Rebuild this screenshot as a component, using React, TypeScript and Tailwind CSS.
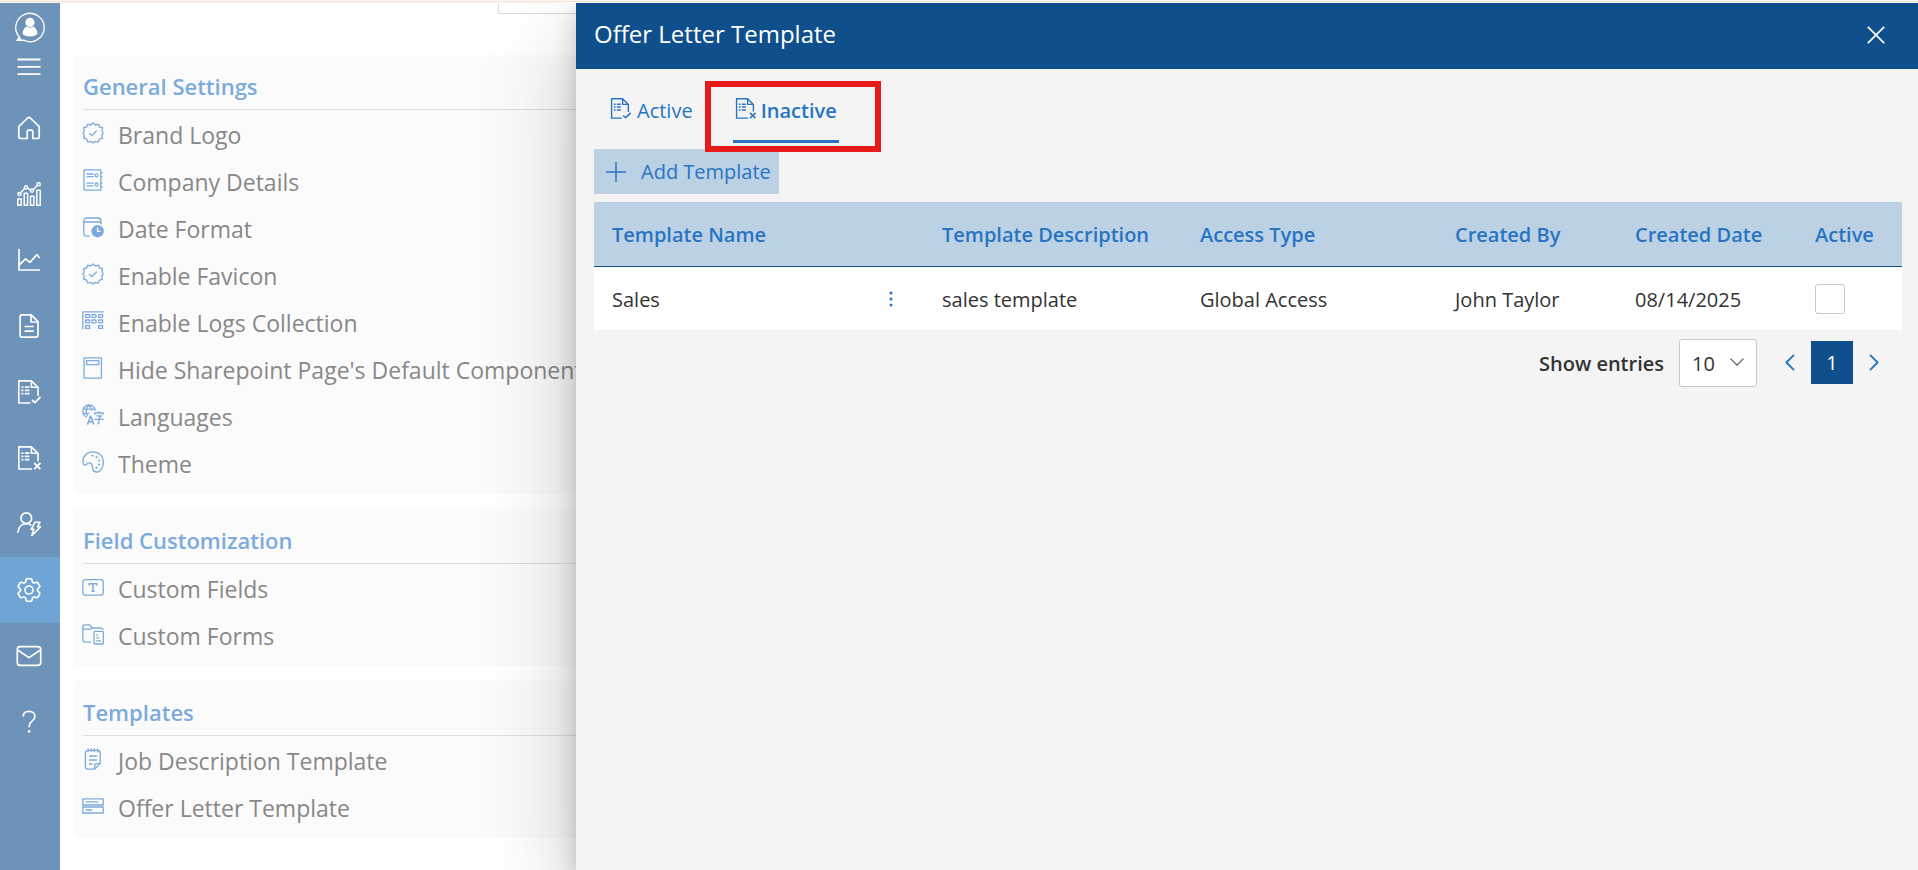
import React from "react";

type IconProps = { className?: string };

const Svg = ({
  children,
  box = "0 0 24 24",
  className = "size-6",
  stroke = 1.5,
}: {
  children: React.ReactNode;
  box?: string;
  className?: string;
  stroke?: number;
}) => (
  <svg
    viewBox={box}
    className={className}
    fill="none"
    stroke="currentColor"
    strokeWidth={stroke}
    strokeLinejoin="round"
    aria-hidden="true"
  >
    {children}
  </svg>
);

/* ---------- sidebar icons (24px box) ---------- */

const LogoIcon = () => (
  <Svg box="0 0 30 31" className="h-[31px] w-[30px]" stroke={1.3}>
    <path d="M4.6 25.200A14.200 14.200 0 1 1 8.600 28.200L2.200 28.400z" />
    <path d="M4.200 24.800 1.600 28.600l4.800-.6z" fill="currentColor" strokeWidth={0.6} />
    <circle cx="15" cy="10.400" r="4.600" fill="currentColor" stroke="none" />
    <path
      d="M7.500 22c.2-3.600 1.800-6.600 4.300-7.400 1.800 1.500 4.600 1.500 6.400 0 2.500.8 4.100 3.800 4.300 7.400-2 1.700-4.700 2.500-7.500 2.500S9.500 23.700 7.500 22z"
      fill="currentColor"
      stroke="none"
    />
  </Svg>
);

const HomeIcon = () => (
  <Svg stroke={1.7}>
    <path d="M1.800 10.600 10.600 2c.9-.8 1.900-.8 2.800 0l8.800 8.600v9.900c0 1.200-.8 2-2 2h-4.400v-6.700c0-1-.6-1.600-1.600-1.600h-2.400c-1 0-1.600.6-1.600 1.600v6.700H3.800c-1.200 0-2-.8-2-2z" />
  </Svg>
);

const ChartIcon = () => (
  <Svg stroke={1.5}>
    <path d="M.8 17h3.400v6.200H.8zM7.200 11.200h3.400v12H7.200zM13.500 14.200h3.400v9h-3.400zM19.800 8.200h3.400v15h-3.400z" />
    <path d="M3.800 10.600 7.600 6.600M10.400 6.200l3.200 1.700M16.400 7.400l4-4.200" />
    <circle cx="2.500" cy="12" r="1.600" />
    <circle cx="9" cy="5.400" r="1.600" />
    <circle cx="15" cy="8.600" r="1.600" />
    <circle cx="21.600" cy="2.200" r="1.600" />
  </Svg>
);

const TrendIcon = () => (
  <Svg stroke={1.700}>
    <path d="M2 1v21h21M2.300 16.800l6.200-6 4.400 3.600 7-7.800 2.600 3.400" />
  </Svg>
);

const DocIcon = () => (
  <Svg stroke={1.700}>
    <path d="M5 .8h9.200l6.800 6.800v13.600c0 1-.8 1.900-1.900 1.900H5c-1 0-1.900-.9-1.900-1.900V2.700C3.100 1.700 4 .8 5 .8zM14 1v7h7M7.500 12.500h9.300M7.500 17.200h9.300" />
  </Svg>
);

const ListLines = () => (
  <path d="M4.400 7.200h2M4.400 10.400h2M4.400 13.600h2M7.800 7.200h4.600M7.800 10.400h4.600M7.800 13.600h4.600" strokeWidth={1.700} />
);

const DocCheckIcon = ({ className = "size-6" }: IconProps) => (
  <Svg className={className} stroke={1.600}>
    <path d="M13.400 23H1.800V.9h12.600l6.600 6.400V16M14.400 1v6.300H21" />
    <ListLines />
    <path d="m15 20 2.800 2.600L23.600 17" strokeWidth={1.800} />
  </Svg>
);

const DocXIcon = ({ className = "size-6" }: IconProps) => (
  <Svg className={className} stroke={1.600}>
    <path d="M15 23H1.800V.9h12.600l6.600 6.400v8M14.400 1v6.300H21" />
    <ListLines />
    <path d="m17.200 17 6.200 6.200M23.400 17l-6.200 6.200" strokeWidth={1.800} />
  </Svg>
);

const UserBoltIcon = () => (
  <Svg stroke={1.700}>
    <circle cx="9.300" cy="6.200" r="5.300" />
    <path d="M.8 20.600C1.400 15 4.800 11.600 9.300 11.600c2 0 3.700.6 5 1.700" />
    <path d="M18 10.200h5l-2.400 4.600h3L14.800 23.600l2-6.300h-2.700z" strokeWidth={1.600} />
  </Svg>
);

const GearIcon = () => (
  <Svg box="2.4 2.400 19.200 19.200" stroke={1.300}>
    <circle cx="12" cy="12" r="3.200" />
    <path d="M9.594 3.940c.090-.542.560-.940 1.110-.940h2.593c.550 0 1.020.398 1.110.940l.213 1.281c.063.374.313.686.645.870.074.040.147.083.220.127.325.196.720.257 1.075.124l1.217-.456a1.125 1.125 0 0 1 1.370.490l1.296 2.247a1.125 1.125 0 0 1-.260 1.431l-1.003.827c-.293.241-.438.613-.430.992a7.723 7.723 0 0 1 0 .255c-.008.378.137.750.430.991l1.004.827c.424.350.534.955.260 1.430l-1.298 2.247a1.125 1.125 0 0 1-1.369.491l-1.217-.456c-.355-.133-.750-.072-1.076.124a6.470 6.470 0 0 1-.220.128c-.331.183-.581.495-.644.869l-.213 1.281c-.090.543-.560.940-1.110.940h-2.594c-.550 0-1.019-.398-1.110-.940l-.213-1.281c-.062-.374-.312-.686-.644-.870a6.520 6.520 0 0 1-.220-.127c-.325-.196-.720-.257-1.076-.124l-1.217.456a1.125 1.125 0 0 1-1.369-.490l-1.297-2.247a1.125 1.125 0 0 1 .260-1.431l1.004-.827c.292-.240.437-.613.430-.991a6.932 6.932 0 0 1 0-.255c.007-.380-.138-.751-.430-.992l-1.004-.827a1.125 1.125 0 0 1-.260-1.430l1.297-2.247a1.125 1.125 0 0 1 1.370-.491l1.216.456c.356.133.751.072 1.076-.124.072-.044.146-.086.220-.128.332-.183.582-.495.644-.869l.214-1.280Z" />
  </Svg>
);

const MailIcon = () => (
  <Svg box="0 0 26 22" className="h-[22px] w-[26px]" stroke={1.700}>
    <rect x="1.300" y="1.600" width="23.400" height="18.800" rx="2.800" />
    <path d="M2 5.200 13 12.600 24 5.200" />
  </Svg>
);

const HelpIcon = () => (
  <Svg stroke={1.700}>
    <path d="M6.200 6.600C6.200 3.400 8.600 1.400 12 1.400s5.900 2 5.900 5c0 4.600-5.700 5-5.700 9.600v1.200" />
    <circle cx="12.100" cy="21.400" r="1.300" fill="currentColor" stroke="none" />
  </Svg>
);

/* ---------- settings icons (22px box) ---------- */

const SealIcon = () => (
  <Svg box="0 0 22 22" className="size-[22px]" stroke={1.300}>
    <path d="M11 1 13.300 3l3.200-.8 1 2.800 3.100.7-.7 3.100L21.300 11l-1.600 2.300.7 3.100-3 .8-1.200 2.900-3-.7L11 21l-2.300-1.700-3 .6-1.200-2.900-2.900-.8.6-3L.8 11l1.500-2.200-.7-3.100 3-.7 1.100-2.800L8.700 3z" />
    <path d="m7.200 11.200 2.600 2.400 5-4.800" />
  </Svg>
);

const DetailsIcon = () => (
  <Svg box="0 0 22 22" className="size-[22px]" stroke={1.300}>
    <path d="M2 .8h16.800v20.400H2zM4.600 5h7M4.600 7.600h7M4.600 14.200h7M4.600 16.800h7M19 3.600h1.600M19 7.800h1.600M19 13.800h1.600M19 18h1.600" />
    <circle cx="14.600" cy="6.300" r="1.500" />
    <circle cx="14.600" cy="15.500" r="1.500" />
  </Svg>
);

const DateIcon = () => (
  <Svg box="0 0 22 22" className="size-[22px]" stroke={1.300}>
    <path d="M7.600 20.200H5C3.200 20.200 1.800 19 1.800 17V5.200C1.800 3 3.200 2 5 2h10.600c2 0 3.400 1.200 3.400 3.200v3M1.800 6H19" />
    <circle cx="15.600" cy="15.200" r="6.200" fill="currentColor" stroke="none" />
    <path d="M15.600 11.600v3.800h3" stroke="#fbfbfb" />
  </Svg>
);

const LogsIcon = () => (
  <Svg box="0 0 22 22" className="size-[22px]" stroke={1.300}>
    <path d="M.8 19.600V1.800h20.800" />
    <path d="M3.600 4.600h4v2.800h-4zM10 4.600h4v2.800h-4zM16.600 4.600h4v2.800h-4zM3.600 10h4v2.800h-4zM10 10h4v2.800h-4zM16.600 10h4v2.800h-4zM3.600 15.600h4v2.800h-4zM16.600 15.600h4v2.800h-4z" />
  </Svg>
);

const PageIcon = () => (
  <Svg box="0 0 22 22" className="size-[22px]" stroke={1.300}>
    <path d="M2 .8h17.400v20.400H2zM4.600 3.600h12.200v4H4.600z" />
  </Svg>
);

const LanguagesIcon = () => (
  <Svg box="0 0 22 22" className="size-[22px]" stroke={1.300}>
    <path d="M5 13C2.400 12.200.8 9.800.8 7.200.8 3.800 3.500 1 7 1c3.300 0 6 2.400 6.200 5.600M.8 5.200h12M1 9.400h6.600M7 1C4.800 3.200 4.200 5 4.200 7.200c0 1.600.4 3.200 1.400 4.600M7 1c2 2 2.600 3.600 2.800 5.800" />
    <path d="M5.400 20.600 8.600 12l3.200 8.600M6.400 17.800h4.400" strokeWidth={1.500} />
    <path d="M16.800 7v1.800M12.800 10.800V9h8.400v1.800M14.400 11.800h5.200l-2.600 2.400v4.400c0 .8-.4 1.200-1.800 1.200M12.400 15.400h9.400" />
  </Svg>
);

const PaletteIcon = () => (
  <Svg box="0 0 22 22" className="size-[22px]" stroke={1.300}>
    <path d="M1.200 12.400C-.2 6 4.600.8 11 .8c6 0 10.400 4.200 10.400 10.200 0 5.200-2.800 10-6.400 10-2.800 0-4.200-1.800-4.400-4.600-.2-3-1-4.600-3.200-4.600-2.400 0-3.200 2.600-4.800 2.400-.8 0-1.200-.8-1.400-1.800z" />
    <g fill="currentColor" stroke="none">
      <circle cx="10.400" cy="4.600" r="1.100" />
      <circle cx="14.600" cy="6.200" r="1.100" />
      <circle cx="17.200" cy="9.600" r="1.100" />
      <circle cx="17" cy="13.600" r="1.100" />
      <circle cx="14.400" cy="16.800" r="1.100" />
    </g>
  </Svg>
);

const FieldIcon = () => (
  <Svg box="0 0 22 22" className="size-[22px]" stroke={1.300}>
    <rect x=".8" y="3.600" width="20.400" height="15.600" rx="2.600" />
    <path d="M7.200 9.400V7.800h7.600v1.600M11 7.800v7.400M9.400 15.200h3.200" strokeWidth={1.500} />
  </Svg>
);

const FormsIcon = () => (
  <Svg box="0 0 22 22" className="size-[22px]" stroke={1.300}>
    <path d="M9 19.200H3.400C1.800 19.200.8 18.200.8 16.800V4c0-1.400.8-2.200 2.200-2.200h4.800L10.200 5h8.600c1.400 0 2.200.8 2.400 2M.8 6.200h7.400L10.400 5" />
    <rect x="12" y="8.400" width="9.400" height="12.600" rx="1" />
    <path d="M14.200 12h1.400M14.200 14.800h3M14.200 17.800h5" />
  </Svg>
);

const NoteIcon = () => (
  <Svg box="0 0 22 22" className="size-[22px]" stroke={1.300}>
    <path d="M12.600 21.200H6c-1.600 0-2.600-1-2.600-2.600V5c0-1.600 1-2.600 2.600-2.600h9.600c1.600 0 2.600 1 2.600 2.600v10.600zM18.200 15.600h-3.400c-1.400 0-2.200.8-2.200 2.200v3.400" />
    <path d="M6.200.6v3.600M9.400.6v3.600M12.400.6v3.600M15.600.6v3.600M7 8h8M7 12h8M7 16h3.600" />
  </Svg>
);

const LetterIcon = () => (
  <Svg box="0 0 22 22" className="size-[22px]" stroke={1.300}>
    <path d="M.8 3.800h20.400V10H.8zM.8 12h20.400v6H.8zM3.600 6.900h12.600M3.600 15h6.400" />
  </Svg>
);

/* ---------- data ---------- */

const navItems = [
  { label: "Home", icon: HomeIcon },
  { label: "Dashboard", icon: ChartIcon },
  { label: "Trends", icon: TrendIcon },
  { label: "Documents", icon: DocIcon },
  { label: "Approved", icon: DocCheckIcon },
  { label: "Rejected", icon: DocXIcon },
  { label: "Candidates", icon: UserBoltIcon },
  { label: "Settings", icon: GearIcon, active: true },
  { label: "Mail", icon: MailIcon },
  { label: "Help", icon: HelpIcon },
];

const sections = [
  {
    title: "General Settings",
    items: [
      { label: "Brand Logo", icon: SealIcon },
      { label: "Company Details", icon: DetailsIcon },
      { label: "Date Format", icon: DateIcon },
      { label: "Enable Favicon", icon: SealIcon },
      { label: "Enable Logs Collection", icon: LogsIcon },
      { label: "Hide Sharepoint Page's Default Components", icon: PageIcon },
      { label: "Languages", icon: LanguagesIcon },
      { label: "Theme", icon: PaletteIcon },
    ],
  },
  {
    title: "Field Customization",
    items: [
      { label: "Custom Fields", icon: FieldIcon },
      { label: "Custom Forms", icon: FormsIcon },
    ],
  },
  {
    title: "Templates",
    items: [
      { label: "Job Description Template", icon: NoteIcon },
      { label: "Offer Letter Template", icon: LetterIcon },
    ],
  },
];

const columns = [
  { label: "Template Name", width: "w-[330px]" },
  { label: "Template Description", width: "w-[258px]" },
  { label: "Access Type", width: "w-[255px]" },
  { label: "Created By", width: "w-[180px]" },
  { label: "Created Date", width: "w-[180px]" },
  { label: "Active", width: "w-[105px]" },
];

/* ---------- layout ---------- */

const Sidebar = () => (
  <nav className="flex w-[60px] shrink-0 flex-col bg-[#6e93b9] text-white">
    <a href="#" aria-label="Profile" className="flex h-12 items-center justify-center">
      <LogoIcon />
    </a>
    <button type="button" aria-label="Toggle menu" className="flex h-11 items-start justify-center pt-1 pr-[2px]">
      <Svg className="size-6" stroke={1.800}>
        <path d="M.5 4.500h23M.5 11.800h23M.5 19.200h23" />
      </Svg>
    </button>
    {navItems.map(({ label, icon: Icon, active }) => (
      <a
        key={label}
        href="#"
        aria-label={label}
        className={`flex h-[66px] items-center justify-center pr-[2px] ${active ? "bg-[#70a4d4]" : ""}`}
      >
        <Icon />
      </a>
    ))}
  </nav>
);

const SettingsPage = () => (
  <main className="flex min-w-0 flex-1 flex-col gap-[15px] overflow-hidden pt-[52px] pl-[15px]">
    {sections.map((section) => (
      <section key={section.title} className="bg-[#fbfbfb] pb-2 pl-[7px]">
        <h2 className="ml-px flex h-[55px] items-end border-b border-[#dcdedf] pb-[6px] text-[22px] leading-[34px] font-semibold text-[#7cabdb]">
          {section.title}
        </h2>
        <ul>
          {section.items.map(({ label, icon: Icon }) => (
            <li key={label}>
              <a href="#" className="flex h-[47px] items-center gap-[14px] text-[23px] text-[#888888]">
                <span className="pb-[2px] text-[#7cabdb]">
                  <Icon />
                </span>
                <span className="pt-[3px] whitespace-nowrap">{label}</span>
              </a>
            </li>
          ))}
        </ul>
      </section>
    ))}
  </main>
);

const Drawer = () => (
  <aside
    role="dialog"
    aria-label="Offer Letter Template"
    className="absolute inset-y-0 right-0 left-[576px] bg-[#f4f4f4] shadow-[0_38px_86px_rgba(0,0,0,0.22),0_7px_22px_rgba(0,0,0,0.18)]"
  >
    <header className="flex h-[66px] items-center justify-between bg-[#0f4f8b] pr-[33px] pb-[2px] pl-[18px] text-white">
      <h1 className="pb-[2px] text-[24px]">Offer Letter Template</h1>
      <button type="button" aria-label="Close">
        <Svg box="0 0 18 18" className="size-[18px]" stroke={1.700}>
          <path d="m.8.8 16.400 16.400M17.200.8.8 17.200" />
        </Svg>
      </button>
    </header>

    <div className="pr-4 pl-[18px]">
      <div role="tablist" className="flex h-[80px] items-start gap-[37px] pl-[13px] text-[20px] text-[#2775c2]">
        <button type="button" role="tab" aria-selected="false" className="flex h-[74px] items-center gap-[6px] px-[3px] pt-[10px]">
          <DocCheckIcon className="mb-[6px] size-[21px]" />
          Active
        </button>
        <button
          type="button"
          role="tab"
          aria-selected="true"
          className="relative flex h-[74px] items-center gap-[5px] border-b-[3px] border-[#2775c2] px-[2px] pt-[13px] font-semibold"
        >
          <DocXIcon className="mb-[6px] size-[21px]" />
          Inactive
          <span className="pointer-events-none absolute top-3 -right-[42px] -bottom-3 -left-[28px] z-10 border-[6px] border-[#e81b1b]" />
        </button>
      </div>

      <button type="button" className="flex h-[45px] items-center gap-[15px] bg-[#bdd1e5] pr-2 pl-3 text-[20px] text-[#2775c2]">
        <Svg box="0 0 20 20" className="size-5" stroke={1.500}>
          <path d="M10 0v20M0 10h20" />
        </Svg>
        Add Template
      </button>

      <table className="mt-2 w-full table-fixed border-separate border-spacing-0 text-left text-[20px]">
        <thead className="bg-[#bdd1e5] text-[#2775c2]">
          <tr>
            {columns.map((column) => (
              <th
                key={column.label}
                scope="col"
                className={`h-[65px] border-b border-[#0f4f8b] pt-[2px] pl-[18px] font-semibold whitespace-nowrap ${column.width}`}
              >
                {column.label}
              </th>
            ))}
          </tr>
        </thead>
        <tbody className="bg-white text-[#333333]">
          <tr>
            <td className="h-[63px] pt-[3px] pl-[18px]">
              <div className="flex items-center justify-between pr-[30px]">
                Sales
                <button type="button" aria-label="More actions" className="pb-[3px] text-[#2775c2]">
                  <svg viewBox="0 0 6 16" className="h-4 w-[6px]" fill="currentColor" aria-hidden="true">
                    <circle cx="3" cy="2" r="1.500" />
                    <circle cx="3" cy="8" r="1.500" />
                    <circle cx="3" cy="14" r="1.500" />
                  </svg>
                </button>
              </div>
            </td>
            <td className="pt-[3px] pl-[18px]">sales template</td>
            <td className="pt-[3px] pl-[18px]">Global Access</td>
            <td className="pt-[3px] pl-[18px]">John Taylor</td>
            <td className="pt-[3px] pl-[18px]">08/14/2025</td>
            <td className="pl-[18px]">
              <input
                type="checkbox"
                aria-label="Active"
                className="block size-[30px] appearance-none rounded-[3px] border border-[#c8c8c8] bg-white"
              />
            </td>
          </tr>
        </tbody>
      </table>

      <div className="flex items-center justify-end pt-[9px] pr-[23px]">
        <label htmlFor="entries" className="pt-[2px] text-[20px] font-semibold text-[#333333]">
          Show entries
        </label>
        <div className="relative ml-[15px]">
          <select
            id="entries"
            defaultValue="10"
            className="block h-12 w-[78px] appearance-none rounded-[3px] border border-[#c8c8c8] bg-white pt-px pl-3 text-[20px] text-[#333333]"
          >
            <option>10</option>
            <option>25</option>
            <option>50</option>
          </select>
          <svg
            viewBox="0 0 14 8"
            className="pointer-events-none absolute top-[19px] right-[13px] h-2 w-[14px]"
            fill="none"
            stroke="#555555"
            strokeWidth="1.200"
            aria-hidden="true"
          >
            <path d="m.5.600 6.500 6.500L13.500.600" />
          </svg>
        </div>
        <div className="ml-7 flex items-center gap-4 pb-[2px] text-[#2775c2]">
          <button type="button" aria-label="Previous page">
            <Svg box="0 0 10 17" className="h-[17px] w-[10px]" stroke={1.900}>
              <path d="M9 .8 1.400 8.500 9 16.200" />
            </Svg>
          </button>
          <button type="button" aria-current="page" className="h-[43px] w-[42px] bg-[#0f4f8b] pt-[2px] text-[20px] text-white">
            1
          </button>
          <button type="button" aria-label="Next page">
            <Svg box="0 0 10 17" className="h-[17px] w-[10px]" stroke={1.900}>
              <path d="m1 .8 7.600 7.700L1 16.200" />
            </Svg>
          </button>
        </div>
      </div>
    </div>
  </aside>
);

export default function App() {
  return (
    <div className="flex h-screen flex-col overflow-hidden bg-white font-['Open_Sans','Noto_Sans',sans-serif]">
      <div className="h-[3px] shrink-0 border-y border-[#fdf6f2] bg-[#f8dfd3]" />
      <div className="relative flex min-h-0 flex-1 overflow-hidden">
        <Sidebar />
        <SettingsPage />
        <div className="absolute top-0 left-[498px] h-[11px] w-[300px] rounded-b-[3px] border border-t-0 border-[#d9d9d9]" />
        <Drawer />
      </div>
    </div>
  );
}
